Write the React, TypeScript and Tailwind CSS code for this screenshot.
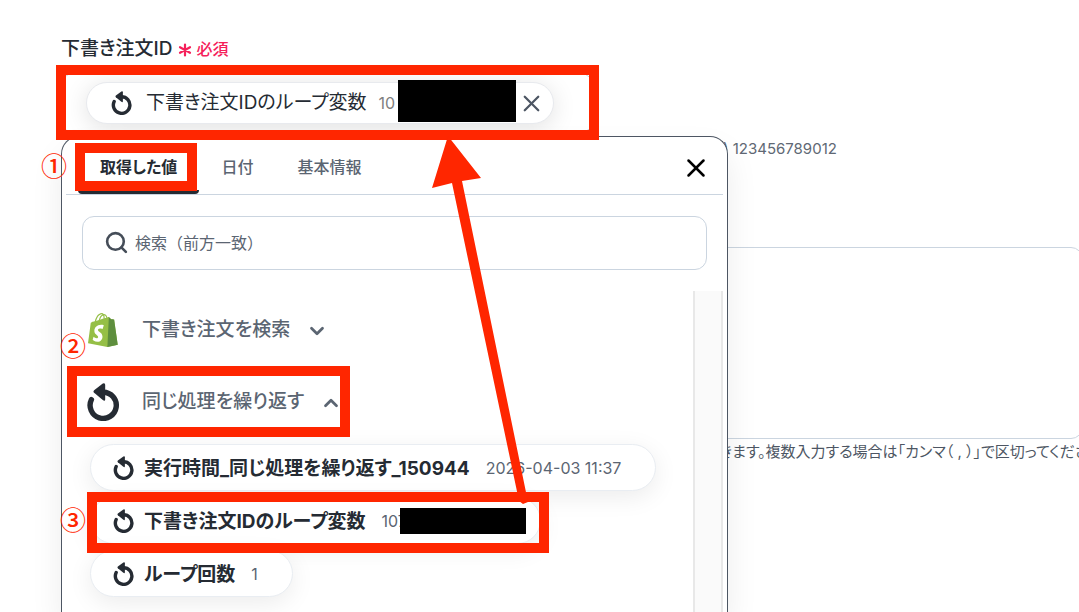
import type { ReactNode } from "react";
import { ChevronDown, ChevronUp, Search, X } from "lucide-react";

const TABS = ["取得した値", "日付", "基本情報"];

type LoopValue = { label: string; value: string; masked?: boolean };

const LOOP_VALUES: LoopValue[] = [
  { label: "実行時間_同じ処理を繰り返す_150944", value: "2026-04-03 11:37" },
  { label: "下書き注文IDのループ変数", value: "107", masked: true },
  { label: "ループ回数", value: "1" },
];

export default function App() {
  return (
    <main className="relative min-h-screen overflow-hidden bg-white font-['Inter','Noto_Sans_CJK_JP',sans-serif] text-[#252b33] [font-feature-settings:'palt']">
      <form className="pl-[61px]">
        <div className="flex items-center gap-1 pt-[35px] text-[19px] leading-7">
          <span className="font-medium">下書き注文ID</span>
          <Asterisk />
          <span className="text-base font-medium text-[#f5205a]">必須</span>
        </div>

        <div className="mt-2.5 w-[532px] rounded-xl border border-[#cbd5e0] px-6 py-2">
          <SelectedValue />
        </div>

        <p className="mt-1 pl-[662px] text-[15px] leading-6 whitespace-nowrap text-[#606874]">) 123456789012</p>

        <textarea
          aria-label="下書き注文ID 一覧"
          className="mt-[86px] -mr-1 block h-[192px] w-[calc(100%+4px)] resize-none rounded-xl border border-[#cbd5e0]"
        />
        <p className="mt-px pl-[658px] text-[15px] leading-6 whitespace-nowrap text-[#4d5663]">
          きます。複数入力する場合は「カンマ（ , ）」で区切ってください
        </p>
      </form>

      <ValuePicker />
      <Annotations />
    </main>
  );
}

function SelectedValue() {
  return (
    <div className="flex h-[42px] w-[468px] items-center rounded-full border border-[#e8eaee] bg-white pr-2 pl-6 shadow-[0_4px_24px_rgba(0,0,0,0.12)]">
      <LoopIcon className="h-6 w-[21px]" />
      <span className="ml-3.5 text-[19px]">下書き注文IDのループ変数</span>
      <span className="ml-3 text-base text-[#808080]">10</span>
      <button type="button" aria-label="削除" className="ml-auto text-[#4d5663]">
        <X size={27} strokeWidth={2} />
      </button>
    </div>
  );
}

function ValuePicker() {
  return (
    <section className="absolute top-[136px] bottom-0 left-[61px] flex w-[667px] flex-col rounded-t-[18px] border border-b-0 border-[#4d5663] bg-white shadow-[0_16px_32px_rgba(0,0,0,0.08)]">
      <header className="mx-1 flex h-[58px] items-stretch border-b border-[#cbd5e0] px-3">
        {TABS.map((tab, i) => (
          <button
            key={tab}
            type="button"
            className={
              i === 0
                ? "rounded-b-sm border-b-4 border-[#252b33] px-[22px] pt-1.5 text-base font-bold"
                : "px-[22px] pt-0.5 text-base font-medium text-[#5b6572]"
            }
          >
            {tab}
          </button>
        ))}
        <button type="button" aria-label="閉じる" className="ml-auto pt-1 text-black">
          <X size={30} strokeWidth={2} />
        </button>
      </header>

      <label className="mx-5 mt-[21px] flex h-[54px] items-center gap-1.5 rounded-xl border border-[#cbd5e0] pr-[22px] pb-0.5 pl-[21px]">
        <Search size={25} strokeWidth={2.5} className="text-[#454d58]" />
        <input
          type="text"
          aria-label="検索"
          placeholder="検索（前方一致）"
          className="flex-1 pt-0.5 text-base outline-none [font-feature-settings:normal] placeholder:text-[#5b6572]"
        />
      </label>

      <div className="mt-[21px] mr-1 flex min-h-0 flex-1">
        <div className="min-w-0 flex-1 overflow-hidden pt-[3px]">
          <GroupRow icon={<ShopifyBag />} label="下書き注文を検索" chevron={<ChevronDown size={22} strokeWidth={3} />} />
          <GroupRow icon={<LoopIcon className="h-[38px] w-8" />} label="同じ処理を繰り返す" chevron={<ChevronUp size={22} strokeWidth={3} />} />
          <ul className="flex flex-col items-start gap-1.5 pt-1.5 pl-7">
            {LOOP_VALUES.map((item) => (
              <li key={item.label}>
                <ValueChip item={item} />
              </li>
            ))}
          </ul>
        </div>
        <div className="w-[30px] border-x-2 border-[#e8e8e8] bg-[#fafafa]" />
      </div>
    </section>
  );
}

function GroupRow({ icon, label, chevron }: { icon: ReactNode; label: string; chevron: ReactNode }) {
  return (
    <button type="button" className="flex h-[72px] items-center pl-[25px] text-[19px] font-medium text-[#5b6572]">
      <span className="flex w-[34px] items-center">{icon}</span>
      <span className="ml-[21px]">{label}</span>
      <span className="ml-4 pt-0.5">{chevron}</span>
    </button>
  );
}

function ValueChip({ item }: { item: LoopValue }) {
  return (
    <button
      type="button"
      className="flex h-[47px] items-center rounded-full border border-[#e9edf2] bg-white pr-[34px] pl-[22px] shadow-[0_6px_24px_rgba(0,0,0,0.08)]"
    >
      <LoopIcon className="h-6 w-[21px]" />
      <span className="ml-2.5 pt-[3px] text-[19px] font-bold">{item.label}</span>
      <span className={item.masked ? "ml-4 w-[124px] text-left text-base text-[#5b6572]" : "ml-4 text-base text-[#5b6572]"}>
        {item.value}
      </span>
    </button>
  );
}

// Numbered boxes, masks and the arrow that walk through the steps
function Annotations() {
  return (
    <div className="pointer-events-none absolute inset-0 text-[#ff2600]">
      <div className="absolute top-[80px] left-[398px] h-[42px] w-[118px] bg-black" />
      <div className="absolute top-[508px] left-[400px] h-[26px] w-[126px] bg-black" />
      <div className="absolute top-[65px] left-[56px] h-[75px] w-[543px] border-10 border-[#ff2600]" />
      <div className="absolute top-[143px] left-[75px] h-[48px] w-[122px] border-10 border-[#ff2600]" />
      <div className="absolute top-[366px] left-[67px] h-[71px] w-[283px] border-10 border-[#ff2600]" />
      <div className="absolute top-[492px] left-[87px] h-[61px] w-[462px] border-10 border-[#ff2600]" />
      <svg className="absolute top-[136px] left-[430px] h-[370px] w-[110px]" viewBox="0 0 110 370" fill="currentColor">
        <path d="M18 0 51 42 32 45 98 366 93 368 89 365 22 47 2 52Z" />
      </svg>
      <StepMark className="top-[149px] left-[41px]">①</StepMark>
      <StepMark className="top-[329px] left-[60px]">②</StepMark>
      <StepMark className="top-[503px] left-[60px]">③</StepMark>
    </div>
  );
}

function StepMark({ className, children }: { className: string; children: ReactNode }) {
  return <span className={`absolute font-['Noto_Sans_CJK_JP',sans-serif] text-[26px] leading-8 font-medium ${className}`}>{children}</span>;
}

function Asterisk() {
  return (
    <svg className="h-4 w-4 text-[#f5205a]" viewBox="0 0 16 16" stroke="currentColor" strokeWidth="2.2" strokeLinecap="round">
      <path d="M8 3.5v11M3 6.2l10 5.6M13 6.2 3 11.8" />
    </svg>
  );
}

function LoopIcon({ className }: { className: string }) {
  return (
    <svg className={`shrink-0 text-[#252b33] ${className}`} viewBox="0 0 32 38" fill="none">
      <path d="M4.4 16.6A13.1 13.1 0 1 0 16.2 9.2" stroke="currentColor" strokeWidth="5.4" strokeLinecap="round" />
      <path d="M7.1 7.2 15.8.6Q18.2-.4 18.2 2V16.4Q18 18.7 15.8 17L7.1 9.8Q5.8 8.5 7.1 7.2Z" fill="currentColor" />
    </svg>
  );
}

function ShopifyBag() {
  return (
    <svg className="h-[34px] w-8" viewBox="0 0 256 292">
      <path
        fill="#95BF46"
        d="M223.774 57.34c-.201-1.46-1.48-2.268-2.537-2.357-1.055-.088-23.383-1.743-23.383-1.743s-15.507-15.395-17.209-17.099c-1.703-1.703-5.029-1.185-6.32-.805-.19.056-3.388 1.043-8.678 2.68-5.18-14.906-14.322-28.604-30.405-28.604-.444 0-.901.018-1.358.044C129.31 3.407 123.644.779 118.75.779c-37.465 0-55.364 46.835-60.976 70.635-14.558 4.511-24.9 7.718-26.221 8.133-8.126 2.549-8.383 2.805-9.45 10.462C21.3 95.806.038 260.235.038 260.235l165.678 31.042 89.77-19.42S223.973 58.8 223.775 57.34zM156.49 40.848l-14.019 4.339c.005-.988.01-1.96.01-3.023 0-9.264-1.286-16.723-3.349-22.636 8.287 1.04 13.806 10.469 17.358 21.32zm-27.638-19.483c2.304 5.773 3.802 14.058 3.802 25.238 0 .572-.005 1.095-.01 1.624-9.117 2.824-19.024 5.89-28.953 8.966 5.575-21.516 16.025-31.908 25.161-35.828zm-11.131-10.537c1.617 0 3.246.549 4.805 1.622-12.007 5.65-24.877 19.88-30.312 48.297l-22.886 7.088C75.694 46.16 90.81 10.828 117.72 10.828z"
      />
      <path
        fill="#5E8E3E"
        d="M221.237 54.983c-1.055-.088-23.383-1.743-23.383-1.743s-15.507-15.395-17.209-17.099c-.637-.634-1.496-.959-2.394-1.099l-12.527 256.233 89.762-19.418S223.972 58.8 223.774 57.34c-.201-1.46-1.48-2.268-2.537-2.357"
      />
      <path
        fill="#fff"
        d="M135.242 104.585l-11.069 32.926s-9.698-5.176-21.586-5.176c-17.428 0-18.305 10.937-18.305 13.693 0 15.038 39.2 20.8 39.2 56.024 0 27.713-17.577 45.558-41.277 45.558-28.44 0-42.984-17.7-42.984-17.7l7.615-25.16s14.95 12.835 27.565 12.835c8.243 0 11.596-6.49 11.596-11.232 0-19.616-32.16-20.491-32.16-52.724 0-27.129 19.472-53.382 58.778-53.382 15.145 0 22.627 4.338 22.627 4.338"
      />
    </svg>
  );
}
